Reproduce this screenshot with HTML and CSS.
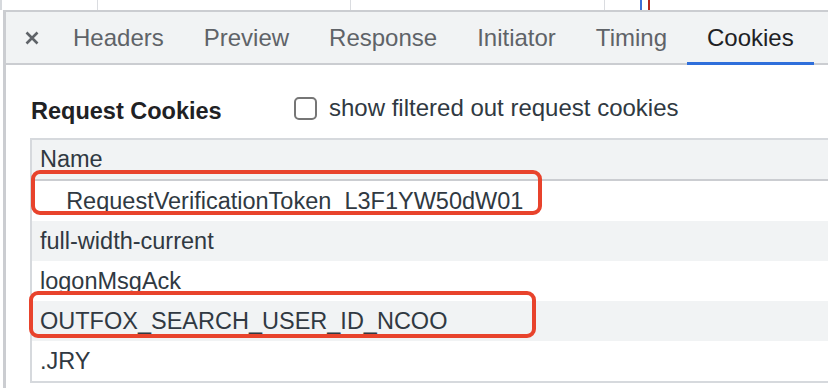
FILE: index.html
```html
<!DOCTYPE html>
<html>
<head>
  <meta charset="utf-8" />
  <title>Network | Cookies</title>
  <link rel="stylesheet" href="styles.css">
</head>
<body>

  <div class="timeline">
    <span class="grid-line" style="left: 95px"></span>
    <span class="grid-line" style="left: 348px"></span>
    <span class="grid-line" style="left: 602px"></span>
    <span class="marker blue" style="left: 638px"></span>
    <span class="marker red" style="left: 646px"></span>
  </div>

  <div class="panel">
    <nav class="tabs">
      <span class="close">
        <svg width="14" height="14" viewBox="0 0 14 14"><path d="M1.5 1.5 L12.5 12.5 M12.5 1.5 L1.5 12.5" /></svg>
      </span>
      <span class="tab">Headers</span>
      <span class="tab">Preview</span>
      <span class="tab">Response</span>
      <span class="tab">Initiator</span>
      <span class="tab">Timing</span>
      <span class="tab active">Cookies</span>
    </nav>

    <div class="content">
      <div class="section-head">
        <h2 class="title">Request Cookies</h2>
        <label class="filter">
          <span class="checkbox"></span>
          <span>show filtered out request cookies</span>
        </label>
      </div>

      <div class="cookies">
        <div class="row head">Name</div>
        <div class="row">__RequestVerificationToken_L3F1YW50dW01</div>
        <div class="row">full-width-current</div>
        <div class="row">logonMsgAck</div>
        <div class="row">OUTFOX_SEARCH_USER_ID_NCOO</div>
        <div class="row">.JRY</div>

        <!-- annotation boxes -->
        <span class="mark" style="left: -1px; top: 30px; width: 511px; height: 45px"></span>
        <span class="mark" style="left: -3px; top: 151px; width: 507px; height: 47px"></span>
      </div>
    </div>
  </div>

</body>
</html>
```

FILE: styles.css
```css
* {
  box-sizing: border-box;
}
html, body {
  margin: 0;
  padding: 0;
  background: #fff;
  overflow: hidden;
}
body {
  width: 828px;
  height: 388px;
  font: 23.5px 'Liberation Sans', Arial, sans-serif;
  color: #303942;
}

/* timeline strip above the panel */
.timeline {
  position: relative;
  height: 10px;
  border-left: 2px solid #d6d9dd;
}
.grid-line {
  position: absolute;
  top: 0;
  bottom: 0;
  width: 1px;
  background: #dadce0;
}
.marker {
  position: absolute;
  top: 0;
  bottom: 0;
  width: 2px;
}
.marker.blue {
  background: #3c6fd6;
}
.marker.red {
  background: #b3261e;
}

/* panel */
.panel {
  margin-left: 3px;
  border-left: 3px solid #cbcdd1;
  border-top: 2px solid #cbcdd1;
  height: 378px;
}
.tabs {
  display: flex;
  align-items: stretch;
  height: 53px;
  background: #f1f3f4;
  border-bottom: 2px solid #cbcdd1;
  font-size: 24px;
}
.close {
  display: flex;
  align-items: center;
  padding: 0 14px 0 19px;
}
.close svg {
  display: block;
}
.close path {
  stroke: #5f6368;
  stroke-width: 2.6;
  fill: none;
}
.tab {
  display: flex;
  align-items: center;
  padding: 0 20px;
  color: #5f6368;
  border-bottom: 3px solid transparent;
  margin-bottom: -2px;
  padding-top: 1px;
}
.tab.active {
  color: #202124;
  border-bottom-color: #2f6fdb;
}

/* cookies section */
.content {
  padding: 30px 0 0 24px;
}
.section-head {
  display: flex;
  align-items: center;
  height: 26px;
  padding-left: 1px;
}
.title {
  width: 263px;
  margin: 6px 0 0;
  font-size: 23.5px;
  font-weight: bold;
  color: #202124;
}
.filter {
  display: flex;
  align-items: center;
  gap: 12px;
  font-size: 24px;
}
.checkbox {
  display: block;
  width: 23px;
  height: 23px;
  border: 2px solid #767676;
  border-radius: 5px;
  background: #fff;
}

.cookies {
  position: relative;
  margin-top: 17px;
  border-top: 2px solid #d6d9dd;
  border-left: 2px solid #d6d9dd;
  border-bottom: 2px solid #d6d9dd;
}
.row {
  display: flex;
  align-items: center;
  height: 40px;
  padding: 0 8px;
  white-space: nowrap;
}
.row.head {
  background: #f1f3f4;
  border-bottom: 2px solid #cbcdd1;
  height: 41px;
}
.row:nth-child(odd) {
  background: #f1f3f4;
}
.mark {
  position: absolute;
  border: 4px solid #e8432c;
  border-radius: 9px;
}
```
